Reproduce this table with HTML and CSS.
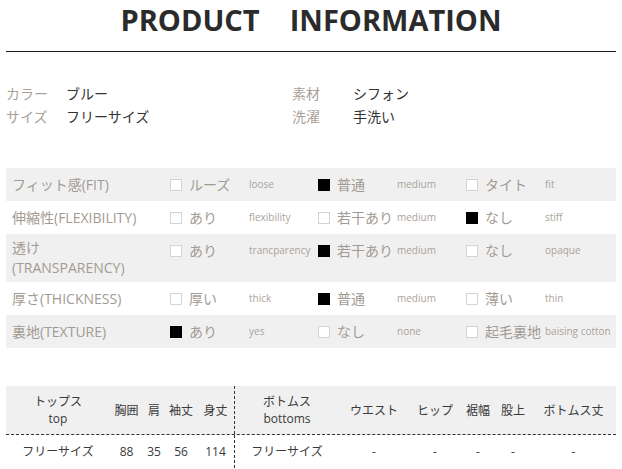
FILE: index.html
```html
<!DOCTYPE html>
<html lang="ja">
<head>
<meta charset="utf-8">
<link rel="stylesheet" href="styles.css">
</head>
<body>
<div class="page">
  <h1 class="title">PRODUCT&nbsp;&nbsp;&nbsp;&nbsp;INFORMATION</h1>
  <div class="rule"></div>

  <div class="info">
    <span class="info-label">カラー</span><span class="info-value">ブルー</span>
    <span class="info-label">素材</span><span class="info-value">シフォン</span>
    <span class="info-label">サイズ</span><span class="info-value">フリーサイズ</span>
    <span class="info-label">洗濯</span><span class="info-value">手洗い</span>
  </div>

  <div class="fit">
    <div class="fit-row shade">
      <div class="fit-label">フィット感(FIT)</div>
      <div class="opt"><span class="cb"></span>ルーズ</div><div class="en">loose</div>
      <div class="opt"><span class="cb on"></span>普通</div><div class="en">medium</div>
      <div class="opt"><span class="cb"></span>タイト</div><div class="en">fit</div>
    </div>
    <div class="fit-row">
      <div class="fit-label">伸縮性(FLEXIBILITY)</div>
      <div class="opt"><span class="cb"></span>あり</div><div class="en">flexibility</div>
      <div class="opt"><span class="cb"></span>若干あり</div><div class="en">medium</div>
      <div class="opt"><span class="cb on"></span>なし</div><div class="en">stiff</div>
    </div>
    <div class="fit-row shade tall">
      <div class="fit-label"><div class="ln">透け</div><div class="ln">(TRANSPARENCY)</div></div>
      <div class="opt"><span class="cb"></span>あり</div><div class="en">trancparency</div>
      <div class="opt"><span class="cb on"></span>若干あり</div><div class="en">medium</div>
      <div class="opt"><span class="cb"></span>なし</div><div class="en">opaque</div>
    </div>
    <div class="fit-row">
      <div class="fit-label">厚さ(THICKNESS)</div>
      <div class="opt"><span class="cb"></span>厚い</div><div class="en">thick</div>
      <div class="opt"><span class="cb on"></span>普通</div><div class="en">medium</div>
      <div class="opt"><span class="cb"></span>薄い</div><div class="en">thin</div>
    </div>
    <div class="fit-row shade">
      <div class="fit-label">裏地(TEXTURE)</div>
      <div class="opt"><span class="cb on"></span>あり</div><div class="en">yes</div>
      <div class="opt"><span class="cb"></span>なし</div><div class="en">none</div>
      <div class="opt"><span class="cb"></span>起毛裏地</div><div class="en">baising cotton</div>
    </div>
  </div>

  <div class="size">
    <div class="size-row head">
      <div class="c">トップス<br>top</div>
      <div class="c">胸囲</div>
      <div class="c">肩</div>
      <div class="c">袖丈</div>
      <div class="c sep">身丈</div>
      <div class="c">ボトムス<br>bottoms</div>
      <div class="c">ウエスト</div>
      <div class="c">ヒップ</div>
      <div class="c">裾幅</div>
      <div class="c">股上</div>
      <div class="c">ボトムス丈</div>
    </div>
    <div class="size-row body">
      <div class="c">フリーサイズ</div>
      <div class="c">88</div>
      <div class="c">35</div>
      <div class="c">56</div>
      <div class="c sep">114</div>
      <div class="c">フリーサイズ</div>
      <div class="c">-</div>
      <div class="c">-</div>
      <div class="c">-</div>
      <div class="c">-</div>
      <div class="c">-</div>
    </div>
  </div>
</div>
</body>
</html>
```
FILE: styles.css
```css
html, body {
  margin: 0;
  padding: 0;
  background: #fff;
}
body {
  font-family: "Open Sans", "Noto Sans CJK JP", sans-serif;
  color: #333;
}
.page {
  width: 622px;
}
.title {
  margin: 0;
  padding: 3px 0 0 0;
  font-size: 29px;
  line-height: 34px;
  font-weight: 700;
  text-align: center;
  color: #2b2b2b;
}
.rule {
  margin: 14px 6px 0 6px;
  border-top: 1px solid #1a1a1a;
}
.info {
  margin-top: 30px;
  padding-left: 6px;
  display: grid;
  grid-template-columns: 60px 226px 61px 1fr;
  font-size: 14px;
  line-height: 23px;
}
.info-label {
  color: #aaa197;
}
.info-value {
  color: #333;
}
.fit {
  margin: 40px 6px 0 6px;
  color: #a39b93;
}
.fit-row {
  display: grid;
  grid-template-columns: 164px 79px 69px 79px 69px 79px 71px;
  padding: 8px 0;
  font-size: 14px;
  line-height: 17px;
}
.fit-row.tall {
  padding: 7px 0 4px 0;
  align-items: start;
}
.fit-row.tall .opt,
.fit-row.tall .en {
  margin-top: 1px;
}
.fit-row.tall .fit-label {
  margin-top: -3px;
}
.fit-row.shade {
  background: #f0f0f0;
}
.fit-label {
  padding-left: 6px;
}
.ln {
  height: 20px;
  line-height: 20px;
}
.opt {
  display: flex;
  align-items: center;
  height: 17px;
  white-space: nowrap;
}
.cb {
  width: 10px;
  height: 10px;
  border: 1px solid #d4d4d4;
  background: #fff;
  margin-right: 7px;
  flex: none;
}
.cb.on {
  background: #000;
  border-color: #000;
}
.en {
  font-size: 10px;
  color: #aaa39c;
  white-space: nowrap;
  line-height: 17px;
}
.size {
  margin: 38px 6px 0 6px;
  font-size: 12px;
  color: #3a3a3a;
}
.size-row {
  display: grid;
  grid-template-columns: 104px 33px 22px 32px 38px 104px 70px 52px 34px 36px 85px;
}
.size-row.head {
  background: #f0f0f0;
  border-bottom: 1px dashed #333;
}
.c {
  display: flex;
  align-items: center;
  justify-content: center;
  text-align: center;
  line-height: 17px;
  white-space: nowrap;
}
.head .c {
  height: 48px;
}
.body .c {
  height: 33px;
}
.sep {
  border-right: 1px dashed #333;
}
```
